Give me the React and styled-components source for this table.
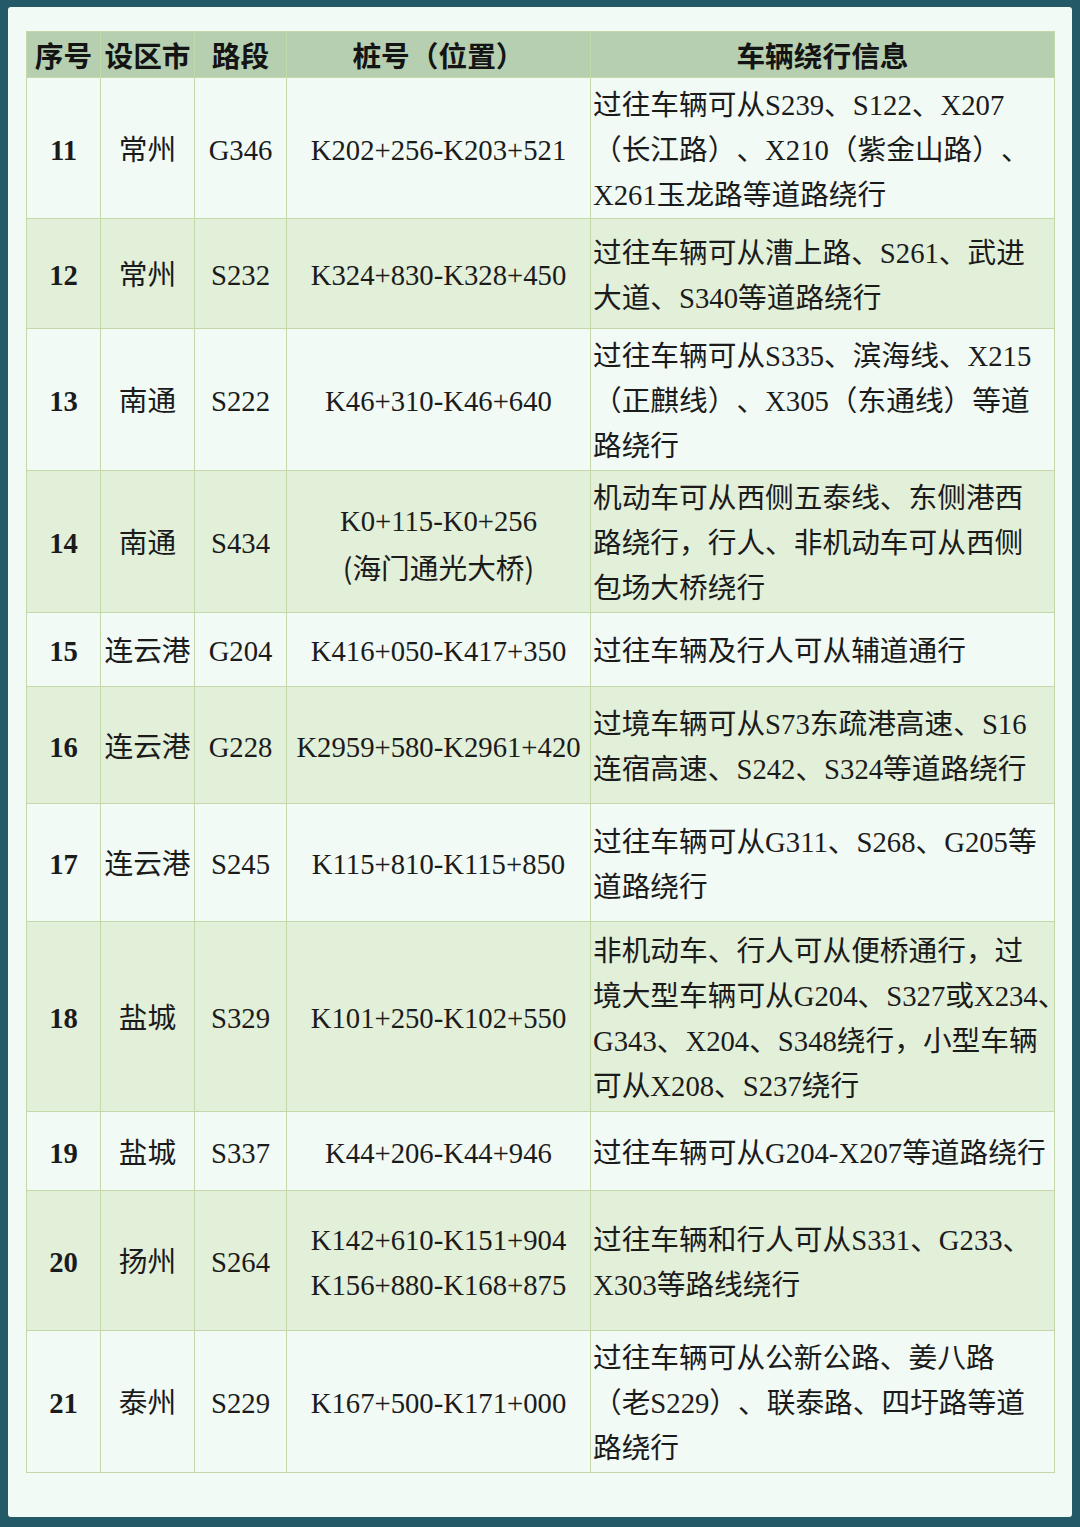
import React from 'react';
import styled, { createGlobalStyle } from 'styled-components';

const GlobalStyle = createGlobalStyle`
  html, body { margin: 0; padding: 0; }
  body { background: #245a68; }
`;

const rows = [
  { no: 11, city: '常州', road: 'G346', pile: ['K202+256-K203+521'], h: 141,
    info: ['过往车辆可从S239、S122、X207', '（长江路）、X210（紫金山路）、', 'X261玉龙路等道路绕行'] },
  { no: 12, city: '常州', road: 'S232', pile: ['K324+830-K328+450'], h: 110,
    info: ['过往车辆可从漕上路、S261、武进', '大道、S340等道路绕行'] },
  { no: 13, city: '南通', road: 'S222', pile: ['K46+310-K46+640'], h: 142,
    info: ['过往车辆可从S335、滨海线、X215', '（正麒线）、X305（东通线）等道', '路绕行'] },
  { no: 14, city: '南通', road: 'S434', pile: ['K0+115-K0+256', '(海门通光大桥)'], h: 142,
    info: ['机动车可从西侧五泰线、东侧港西', '路绕行，行人、非机动车可从西侧', '包场大桥绕行'] },
  { no: 15, city: '连云港', road: 'G204', pile: ['K416+050-K417+350'], h: 74,
    info: ['过往车辆及行人可从辅道通行'] },
  { no: 16, city: '连云港', road: 'G228', pile: ['K2959+580-K2961+420'], h: 117,
    info: ['过境车辆可从S73东疏港高速、S16', '连宿高速、S242、S324等道路绕行'] },
  { no: 17, city: '连云港', road: 'S245', pile: ['K115+810-K115+850'], h: 118,
    info: ['过往车辆可从G311、S268、G205等', '道路绕行'] },
  { no: 18, city: '盐城', road: 'S329', pile: ['K101+250-K102+550'], h: 190,
    info: ['非机动车、行人可从便桥通行，过', '境大型车辆可从G204、S327或X234、', 'G343、X204、S348绕行，小型车辆', '可从X208、S237绕行'] },
  { no: 19, city: '盐城', road: 'S337', pile: ['K44+206-K44+946'], h: 79,
    info: ['过往车辆可从G204-X207等道路绕行'] },
  { no: 20, city: '扬州', road: 'S264', pile: ['K142+610-K151+904', 'K156+880-K168+875'], h: 140,
    info: ['过往车辆和行人可从S331、G233、', 'X303等路线绕行'] },
  { no: 21, city: '泰州', road: 'S229', pile: ['K167+500-K171+000'], h: 142,
    info: ['过往车辆可从公新公路、姜八路', '（老S229）、联泰路、四圩路等道', '路绕行'] },
];

export default function App() {
  return (
    <>
      <GlobalStyle />
      <Frame>
        <Panel>
          <Table>
            <colgroup>
              <col style={{ width: 74 }} />
              <col style={{ width: 94 }} />
              <col style={{ width: 92 }} />
              <col style={{ width: 304 }} />
              <col style={{ width: 464 }} />
            </colgroup>
            <thead>
              <HeadRow>
                <Th>序号</Th>
                <Th>设区市</Th>
                <Th>路段</Th>
                <Th>桩号（位置）</Th>
                <Th>车辆绕行信息</Th>
              </HeadRow>
            </thead>
            <tbody>
              {rows.map((r, i) => (
                <Row key={r.no} $h={r.h} $alt={i % 2 === 1}>
                  <NoCell>{r.no}</NoCell>
                  <Cell>{r.city}</Cell>
                  <Cell>{r.road}</Cell>
                  <Cell>
                    {r.pile.map((p) => (
                      <Line key={p} $sans={p.startsWith('(')}>{p}</Line>
                    ))}
                  </Cell>
                  <InfoCell>
                    {r.info.map((t) => (
                      <Line key={t} $tight={t.length > 22}>{t}</Line>
                    ))}
                  </InfoCell>
                </Row>
              ))}
            </tbody>
          </Table>
        </Panel>
      </Frame>
    </>
  );
}

const Frame = styled.div`
  width: 1080px;
  height: 1527px;
  box-sizing: border-box;
  padding: 7px 8px 10px 8px;
  background: #245a68;
`;

const Panel = styled.div`
  height: 100%;
  box-sizing: border-box;
  background: #f1faf5;
  border-radius: 3px;
  padding: 24px 18px 0 18px;
`;

const Table = styled.table`
  width: 1028px;
  border-collapse: collapse;
  table-layout: fixed;
  font-family: "Liberation Serif", "Noto Sans CJK SC", serif;
  font-size: 28.7px;
  color: #1b1b1b;
  text-spacing-trim: space-all;
`;

const HeadRow = styled.tr`
  height: 46px;
  background: #b6cfb0;
`;

const Th = styled.th`
  border: 1px solid #c3d9aa;
  padding: 0;
  font-family: "Noto Sans CJK SC", sans-serif;
  font-weight: 700;
  text-align: center;
  vertical-align: middle;
  white-space: nowrap;
  color: #141414;
`;

const Row = styled.tr`
  height: ${(p) => p.$h}px;
  background: ${(p) => (p.$alt ? '#e2efd9' : '#f1faf5')};
`;

const Cell = styled.td`
  border: 1px solid #c3d9aa;
  padding: 4px 0 0 0;
  text-align: center;
  vertical-align: middle;
  line-height: 45px;
  white-space: nowrap;
`;

const NoCell = styled(Cell)`
  font-weight: 700;
`;

const InfoCell = styled(Cell)`
  text-align: left;
  padding: 4px 0 0 2px;
`;

const Line = styled.div`
  white-space: nowrap;
  font-family: ${(p) => (p.$sans ? '"Noto Sans CJK SC", sans-serif' : 'inherit')};
  letter-spacing: ${(p) => (p.$tight ? '-1.1px' : '0')};
  text-spacing-trim: ${(p) => (p.$tight ? 'normal' : 'space-all')};
`;
